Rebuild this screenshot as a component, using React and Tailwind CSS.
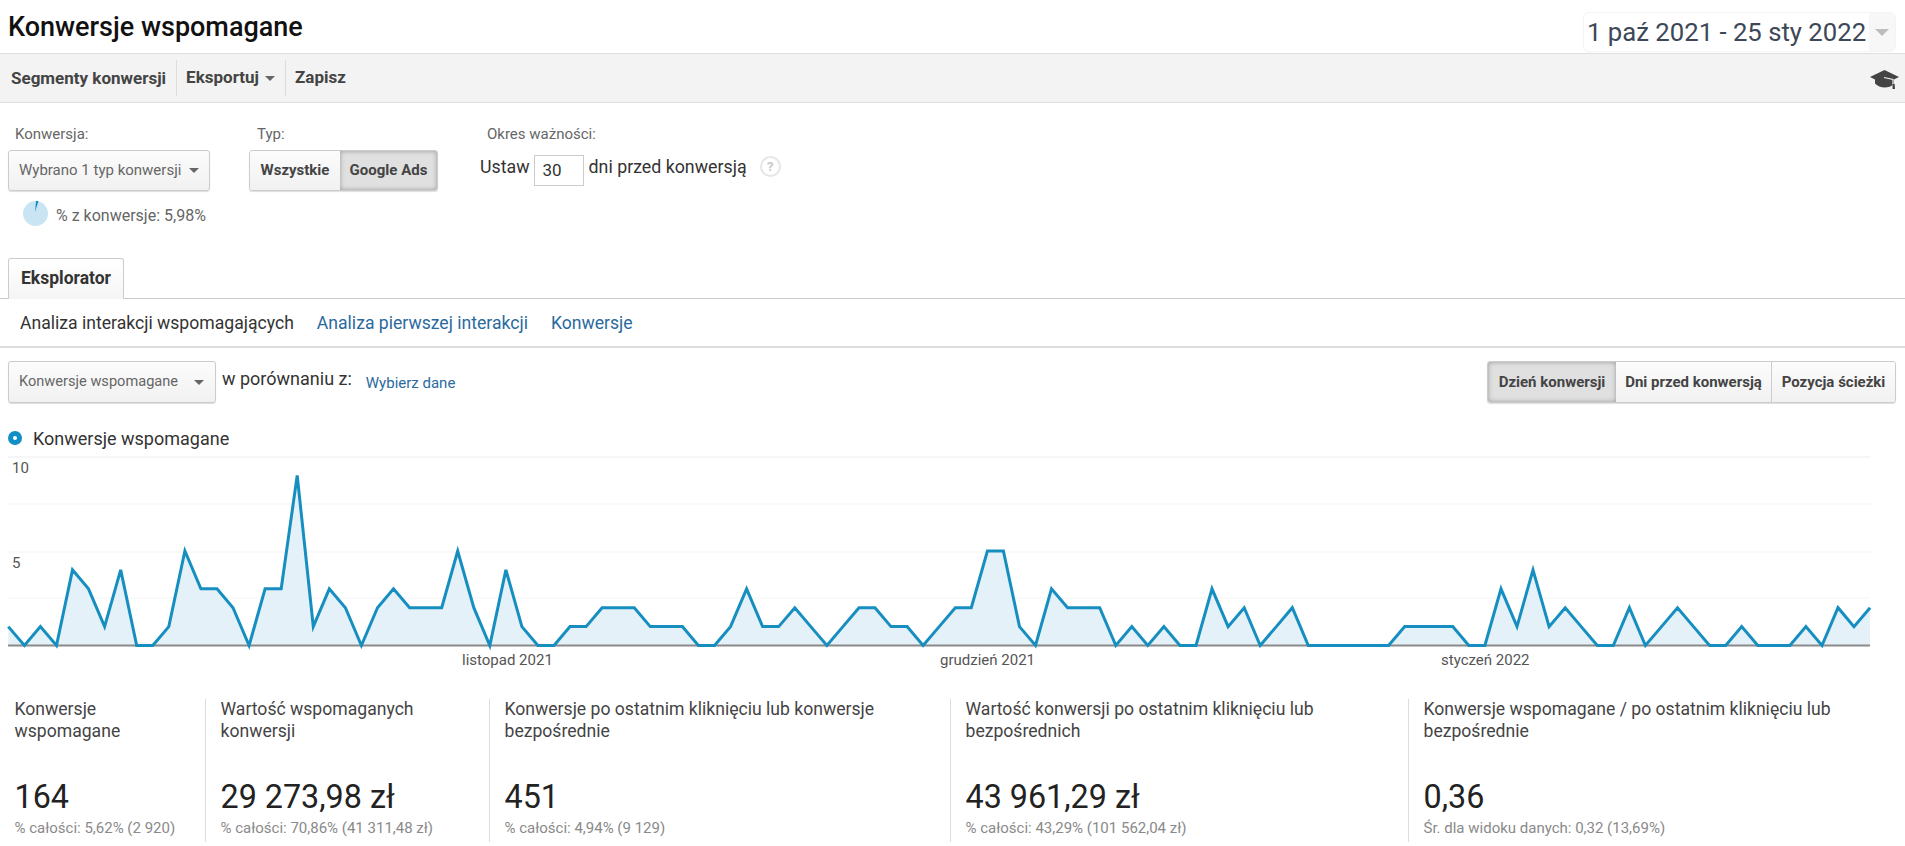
import React from 'react'

const data = [
  1, 0, 1, 0, 4, 3, 1, 4, 0, 0, 1, 5, 3, 3, 2, 0, 3, 3, 9, 1, 3, 2, 0, 2, 3, 2, 2, 2, 5, 2,
  0, 4, 1, 0, 0, 1, 1, 2, 2, 2, 1, 1, 1, 0, 0, 1, 3, 1, 1, 2, 1, 0, 1, 2, 2, 1, 1, 0, 1, 2,
  2, 5, 5, 1, 0, 3, 2, 2, 2, 0, 1, 0, 1, 0, 0, 3, 1, 2, 0, 1, 2, 0, 0, 0, 0, 0, 0, 1, 1, 1,
  1, 0, 0, 3, 1, 4, 1, 2, 1, 0, 0, 2, 0, 1, 2, 1, 0, 0, 1, 0, 0, 0, 1, 0, 2, 1, 2,
]

const metrics = [
  { title: 'Konwersje wspomagane', value: '164', note: '% całości: 5,62% (2 920)' },
  { title: 'Wartość wspomaganych konwersji', value: '29 273,98 zł', note: '% całości: 70,86% (41 311,48 zł)' },
  { title: 'Konwersje po ostatnim kliknięciu lub konwersje bezpośrednie', value: '451', note: '% całości: 4,94% (9 129)' },
  { title: 'Wartość konwersji po ostatnim kliknięciu lub bezpośrednich', value: '43 961,29 zł', note: '% całości: 43,29% (101 562,04 zł)' },
  { title: 'Konwersje wspomagane / po ostatnim kliknięciu lub bezpośrednie', value: '0,36', note: 'Śr. dla widoku danych: 0,32 (13,69%)' },
]

const Caret = ({ className }) => (
  <span className={`inline-block w-0 h-0 border-x-[5px] border-x-transparent border-t-[5px] ${className}`} />
)

const Chart = () => {
  // 0,0 of the svg sits at page x=0, y=450
  const x = (i) => 8.3 + i * 16.05
  const y = (v) => 195.5 - v * 18.9
  const line = data.map((v, i) => `${x(i).toFixed(1)},${y(v).toFixed(1)}`).join(' ')
  const area = `8.3,195.5 ${line} 1870,195.5`

  return (
    <svg width="1905" height="220" className="block">
      {[7, 54, 102, 148].map((gy) => (
        <line key={gy} x1="8" x2="1870" y1={gy} y2={gy} stroke={gy === 7 ? '#eeeeee' : '#f3f3f3'} strokeWidth="1" />
      ))}
      <polygon points={area} fill="#e4f1f8" />
      <line x1="8" x2="1870" y1="195.5" y2="195.5" stroke="#8a8a8a" strokeWidth="2" />
      <polyline points={line} fill="none" stroke="#168fc0" strokeWidth="3" strokeLinejoin="miter" />
      <g fontFamily="Roboto, sans-serif" fontSize="15" fill="#555555">
        <text x="12" y="23">10</text>
        <text x="12" y="118">5</text>
        <text x="462" y="215">listopad 2021</text>
        <text x="940" y="215">grudzień 2021</text>
        <text x="1441" y="215">styczeń 2022</text>
      </g>
    </svg>
  )
}

const App = () => {
  return (
    <div className="w-[1905px] h-[846px] overflow-hidden bg-white font-['Roboto',sans-serif] text-[#333]">
      <header className="h-[53px] flex justify-between pl-[8px] pr-[9px]">
        <h1 className="text-[27px] leading-[54px] font-medium text-[#111] whitespace-nowrap">Konwersje wspomagane</h1>
        <div className="mt-[12px] w-[313px] h-[40px] flex rounded-md border border-[#f4f4f4] overflow-hidden">
          <span className="flex-1 pl-[3px] text-[25.7px] leading-[38px] text-[#3c4858] whitespace-nowrap">1 paź 2021 - 25 sty 2022</span>
          <span className="w-[26px] bg-[#f7f7f7] flex items-center justify-center">
            <span className="w-0 h-0 border-x-[7px] border-x-transparent border-t-[7px] border-t-[#bdbdbd]" />
          </span>
        </div>
      </header>

      <div className="h-[50px] bg-[#f3f3f3] border-y border-[#dedede] flex items-center text-[17px] font-bold text-[#444] pr-[6px]">
        <span className="pl-[11px] pr-[10px] h-[36px] leading-[36px] border-r border-[#dcdcdc] whitespace-nowrap">Segmenty konwersji</span>
        <span className="pl-[9px] pr-[10px] h-[36px] flex items-center gap-[6px] border-r border-[#dcdcdc]">
          Eksportuj <Caret className="border-t-[#666]" />
        </span>
        <span className="pl-[9px]">Zapisz</span>
        <svg viewBox="0 0 29 19" className="ml-auto mt-[2px] w-[29px] h-[19px]">
          <path d="M14.5 0 29 7 24 9.5V14c-2.5 2.5-6 3.5-9.5 3.5S7.5 16 5 13.5V9.5L0 7Z" fill="#444" />
          <path d="M14 7.5 23 9.5V15" fill="none" stroke="#f3f3f3" strokeWidth="1.2" />
          <path d="M22.5 14h2.2l.3 5h-2.5Z" fill="#444" />
        </svg>
      </div>

      <section className="h-[155px] flex text-[15px] text-[#666]">
        <div className="ml-[8px] w-[202px] pt-[23px]">
          <div className="pl-[7px] h-[24px] leading-[16px]">Konwersja:</div>
          <div className="h-[41px] rounded-[3px] border border-[#ccc] shadow-[0_1px_1px_#ddd] bg-gradient-to-b from-[#fcfcfc] to-[#f1f1f1] flex items-center justify-between pl-[10px] pr-[10px] whitespace-nowrap">
            Wybrano 1 typ konwersji <Caret className="border-t-[#666]" />
          </div>
          <div className="mt-[7px] ml-[15px] flex items-center gap-[8px]">
            <svg viewBox="0 0 25 25" className="w-[25px] h-[25px]">
              <circle cx="12.5" cy="12.5" r="12.5" fill="#c9e5f4" />
              <path d="M12 11 13 0h2.5Z" fill="#0f8fc6" />
            </svg>
            <span className="mt-[6px] text-[16px] whitespace-nowrap">% z konwersje: 5,98%</span>
          </div>
        </div>

        <div className="ml-[39px] w-[189px] pt-[23px]">
          <div className="pl-[8px] h-[24px] leading-[16px]">Typ:</div>
          <div className="h-[41px] flex rounded-[3px] border border-[#ccc] shadow-[0_1px_1px_#ddd] font-bold text-[#444] overflow-hidden">
            <span className="w-[90px] flex items-center justify-center bg-gradient-to-b from-[#fcfcfc] to-[#f1f1f1]">Wszystkie</span>
            <span className="flex-1 flex items-center justify-center bg-[#e0e0e0] shadow-[inset_0_0_5px_#999]">Google Ads</span>
          </div>
        </div>

        <div className="ml-[42px] pt-[23px]">
          <div className="pl-[7px] h-[28px] leading-[16px]">Okres ważności:</div>
          <div className="flex items-center text-[17.8px] text-[#333]">
            <span className="mb-[6px] whitespace-nowrap">Ustaw</span>
            <input readOnly value="30" className="ml-[4px] w-[50px] h-[31px] border border-[#ccc] pl-[8px] text-[17px] text-[#333] outline-none" />
            <span className="ml-[5px] mb-[6px] whitespace-nowrap">dni przed konwersją</span>
            <span className="ml-[13px] mb-[8px] w-[21px] h-[21px] rounded-full border-2 border-[#e6e6e6] text-[13px] leading-[17px] font-bold text-center text-[#c8c8c8]">?</span>
          </div>
        </div>
      </section>

      <nav className="h-[41px] border-b border-[#ccc] pl-[8px]">
        <div className="w-[116px] h-[41px] rounded-t-[3px] border border-b-0 border-[#ccc] bg-gradient-to-b from-white to-[#f5f5f5] text-center text-[17.5px] leading-[39px] font-bold text-[#333]">Eksplorator</div>
      </nav>

      <div className="h-[49px] border-b-2 border-[#ddd] flex items-center gap-[23px] pl-[20px] pt-[2px] text-[17.6px]">
        <span className="text-[#333]">Analiza interakcji wspomagających</span>
        <a className="text-[#2a6a9e]">Analiza pierwszej interakcji</a>
        <a className="text-[#2a6a9e]">Konwersje</a>
      </div>

      <div className="pt-[13px] pl-[8px] pr-[9px] flex items-start">
        <div className="w-[208px] h-[42px] rounded-[3px] border border-[#ccc] shadow-[0_1px_1px_#ddd] bg-gradient-to-b from-[#fcfcfc] to-[#f1f1f1] flex items-center justify-between pl-[10px] pr-[11px] text-[14.6px] text-[#666] whitespace-nowrap">
          Konwersje wspomagane <Caret className="border-t-[#666]" />
        </div>
        <span className="ml-[6px] mt-[4px] text-[18px] text-[#333] whitespace-nowrap">w porównaniu z:</span>
        <a className="ml-[14px] mt-[11px] text-[15px] text-[#2a6a9e] whitespace-nowrap">Wybierz dane</a>
        <div className="ml-auto w-[409px] h-[42px] flex rounded-[3px] border border-[#ccc] shadow-[0_1px_1px_#ddd] text-[15px] font-bold text-[#444] overflow-hidden whitespace-nowrap">
          <span className="w-[128px] flex items-center justify-center bg-[#e0e0e0] shadow-[inset_0_0_5px_#999]">Dzień konwersji</span>
          <span className="w-[156px] flex items-center justify-center border-r border-[#ccc] bg-gradient-to-b from-[#fcfcfc] to-[#f1f1f1]">Dni przed konwersją</span>
          <span className="flex-1 flex items-center justify-center bg-gradient-to-b from-[#fcfcfc] to-[#f1f1f1]">Pozycja ścieżki</span>
        </div>
      </div>

      <div className="h-[47px] pl-[8px] pt-[24px] pb-[1px] flex items-center gap-[11px] text-[18px] text-[#333]">
        <span className="w-[14px] h-[14px] rounded-full bg-[#0f8fc6] flex items-center justify-center">
          <span className="w-[4px] h-[4px] rounded-full bg-white" />
        </span>
        Konwersje wspomagane
      </div>

      <Chart />

      <div className="mt-[29px] grid grid-cols-[205px_284px_461px_458px_1fr] h-[143px]">
        {metrics.map((m, i) => (
          <div key={m.title} className={`pl-[14.5px] flex flex-col ${i > 0 ? 'border-l border-[#ddd]' : ''}`}>
            <div className="h-[75px] text-[17.6px] leading-[21.5px] text-[#444] max-w-[425px] pr-[10px]">{m.title}</div>
            <div className="text-[32.3px] leading-[40px] mt-[3px] text-[#222] whitespace-nowrap">{m.value}</div>
            <div className="mt-[2px] text-[15px] leading-[18px] text-[#8a8a8a] whitespace-nowrap">{m.note}</div>
          </div>
        ))}
      </div>
    </div>
  )
}

export default App
